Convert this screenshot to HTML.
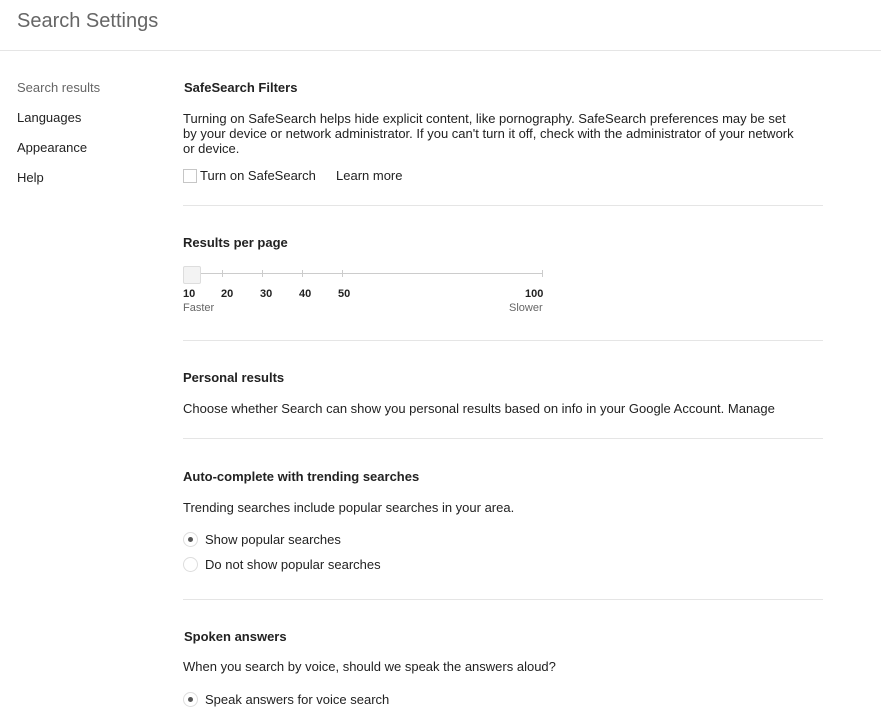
<!DOCTYPE html>
<html><head><meta charset="utf-8"><style>
body{margin:0;width:881px;height:710px;overflow:hidden;background:#fff;font-family:"Liberation Sans",Arial,sans-serif;font-size:13px;color:#222;position:relative}
.a{position:absolute;white-space:nowrap;line-height:15px}
.h{font-weight:bold;font-size:13px;color:#222}
.hr{position:absolute;left:183px;width:640px;height:1px;background:#e5e5e5}
.nav{color:#222}
.rad{position:absolute;width:13px;height:13px;border:1px solid #ddd;border-radius:50%;background:#fff}
.rad.on::after{content:"";position:absolute;left:4px;top:4px;width:5px;height:5px;border-radius:50%;background:#555}
.tick{position:absolute;top:270px;width:1px;height:7px;background:#ccc}
.n{position:absolute;top:288px;font-size:11px;font-weight:bold;color:#222}
</style></head><body>
<div class="a" style="left:17px;top:9px;font-size:20px;line-height:24px;color:#666">Search Settings</div>
<div style="position:absolute;left:0;top:50px;width:881px;height:1px;background:#e5e5e5"></div>
<div class="a" style="left:17px;top:80px;color:#666">Search results</div>
<div class="a nav" style="left:17px;top:110px">Languages</div>
<div class="a nav" style="left:17px;top:140px">Appearance</div>
<div class="a nav" style="left:17px;top:170px">Help</div>

<div class="a h" style="left:184px;top:80px">SafeSearch Filters</div>
<div class="a" style="left:183px;top:111px">Turning on SafeSearch helps hide explicit content, like pornography. SafeSearch preferences may be set<br>by your device or network administrator. If you can't turn it off, check with the administrator of your network<br>or device.</div>
<div style="position:absolute;left:183px;top:169px;width:12px;height:12px;border:1px solid #c6c6c6;background:#fff"></div>
<div class="a" style="left:200px;top:168px">Turn on SafeSearch</div>
<div class="a" style="left:336px;top:168px">Learn more</div>
<div class="hr" style="top:205px"></div>

<div class="a h" style="left:183px;top:235px">Results per page</div>
<div style="position:absolute;left:183px;top:273px;width:360px;height:1px;background:#ccc"></div>
<div class="tick" style="left:222px"></div><div class="tick" style="left:262px"></div><div class="tick" style="left:302px"></div><div class="tick" style="left:342px"></div><div class="tick" style="left:542px"></div>
<div style="position:absolute;left:183px;top:266px;width:16px;height:16px;border:1px solid #ddd;background:#f3f3f3;border-radius:2px"></div>
<div class="n" style="left:183px">10</div><div class="n" style="left:221px">20</div><div class="n" style="left:260px">30</div><div class="n" style="left:299px">40</div><div class="n" style="left:338px">50</div><div class="n" style="left:525px">100</div>
<div class="a" style="left:183px;top:301px;font-size:11px;color:#666">Faster</div>
<div class="a" style="left:509px;top:301px;font-size:11px;color:#666">Slower</div>
<div class="hr" style="top:340px"></div>

<div class="a h" style="left:183px;top:370px">Personal results</div>
<div class="a" style="left:183px;top:401px">Choose whether Search can show you personal results based on info in your Google Account. Manage</div>
<div class="hr" style="top:438px"></div>

<div class="a h" style="left:183px;top:469px">Auto-complete with trending searches</div>
<div class="a" style="left:183px;top:500px">Trending searches include popular searches in your area.</div>
<div class="rad on" style="left:183px;top:532px"></div>
<div class="a" style="left:205px;top:532px">Show popular searches</div>
<div class="rad" style="left:183px;top:557px"></div>
<div class="a" style="left:205px;top:557px">Do not show popular searches</div>
<div class="hr" style="top:599px"></div>

<div class="a h" style="left:184px;top:629px">Spoken answers</div>
<div class="a" style="left:183px;top:659px">When you search by voice, should we speak the answers aloud?</div>
<div class="rad on" style="left:183px;top:692px"></div>
<div class="a" style="left:205px;top:692px">Speak answers for voice search</div>
</body></html>
